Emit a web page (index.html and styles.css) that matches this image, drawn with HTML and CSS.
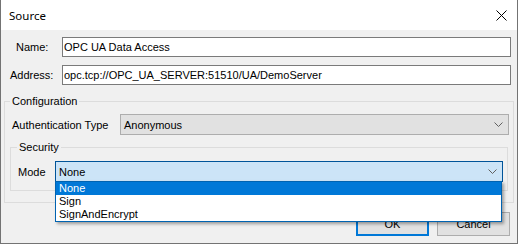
FILE: index.html
```html
<!DOCTYPE html>
<html>
  <head>
    <meta charset="UTF-8">
    <title>Source</title>
    <link rel="stylesheet" href="styles.css">
  </head>
  <body>
    <div class="dialog">
      <div class="titlebar">
        <span class="title">Source</span>
        <svg class="close" width="11" height="11" viewBox="0 0 11 11">
          <path d="M0.5 0.5 L10.5 10.5 M10.5 0.5 L0.5 10.5" stroke="#000" stroke-width="1" fill="none"/>
        </svg>
      </div>
      <div class="content">
        <div class="field name-row">
          <label>Name:</label>
          <div class="textbox">OPC UA Data Access</div>
        </div>
        <div class="field address-row">
          <label>Address:</label>
          <div class="textbox">opc.tcp://OPC_UA_SERVER:51510/UA/DemoServer</div>
        </div>

        <fieldset class="group config">
          <legend>Configuration</legend>
          <div class="field auth-row">
            <label>Authentication Type</label>
            <div class="combo">
              <span>Anonymous</span>
              <svg class="chevron" width="9" height="5" viewBox="0 0 9 5"><path d="M0.5 0.5 L4.5 4.5 L8.5 0.5" stroke="#606060" fill="none"/></svg>
            </div>
          </div>

          <fieldset class="group security">
            <legend>Security</legend>
            <div class="field mode-row">
              <label>Mode</label>
              <div class="combo active">
                <span>None</span>
                <svg class="chevron" width="9" height="5" viewBox="0 0 9 5"><path d="M0.5 0.5 L4.5 4.5 L8.5 0.5" stroke="#606060" fill="none"/></svg>
                <ul class="droplist">
                  <li class="selected">None</li>
                  <li>Sign</li>
                  <li>SignAndEncrypt</li>
                </ul>
              </div>
            </div>
          </fieldset>
        </fieldset>

        <div class="buttons">
          <button class="btn default">OK</button>
          <button class="btn">Cancel</button>
        </div>
      </div>
    </div>
  </body>
</html>
```

FILE: styles.css
```css
body { margin:0; font-family:"Liberation Sans", Arial, sans-serif; font-size:11px; color:#000; }

.dialog { width:518px; height:244px; box-sizing:border-box; border:1px solid #737373; border-top:0; background:#f0f0f0; }

.titlebar { height:30px; box-sizing:border-box; background:#fff; display:flex; align-items:center; justify-content:space-between; padding:1px 10px 0 8px; }
.title { font-family:"Noto Sans", sans-serif; font-size:11.5px; }
.close { display:block; }

.field { display:flex; align-items:center; justify-content:space-between; }
.field label { white-space:nowrap; }

.name-row { margin-top:7px; padding:0 6px 0 15px; }
.address-row { margin-top:8px; padding:0 6px 0 9px; }

.textbox { width:449px; height:20px; box-sizing:border-box; border:1px solid #7a7a7a; background:#fff; padding-left:1px; line-height:18px; white-space:nowrap; }

.group { border:1px solid #dcdcdc; padding:0; min-width:0; }
.group legend { padding:0 2px; line-height:14px; }

.config { margin:9px 3px 0 3px; padding-bottom:11px; }
.config > legend { margin-left:5px; }

.auth-row { margin-top:6px; padding:0 4px 0 7px; }

.combo { position:relative; height:21px; box-sizing:border-box; border:1px solid #adadad; background:#e1e1e1; padding:0 5px 0 3px; display:flex; align-items:center; justify-content:space-between; white-space:nowrap; }
.auth-row .combo { width:389px; }
.combo.active { border-color:#005499; background:#cce4f7; }

.security { margin:5px 5px 0 5px; padding-bottom:8px; }
.security > legend { margin-left:6px; }

.mode-row { margin-top:7px; padding:0 4px 0 7px; }
.mode-row .combo { width:448px; }

.droplist { position:absolute; top:19px; left:-1px; right:0; margin:0; padding:0; list-style:none; background:#fff; border:1px solid #0063b1; box-shadow:2px 2px 3px rgba(0,0,0,0.35); z-index:2; }
.droplist li { height:13px; line-height:13px; padding-left:3px; overflow:hidden; }
.droplist li.selected { background:#0078d7; color:#fff; }

.buttons { display:flex; justify-content:flex-end; gap:8px; margin-top:9px; padding-right:7px; }
.btn { width:73px; height:24px; box-sizing:border-box; border:1px solid #adadad; background:#e1e1e1; font:inherit; color:#000; padding:0; }
.btn.default { border:2px solid #0078d7; }
```
